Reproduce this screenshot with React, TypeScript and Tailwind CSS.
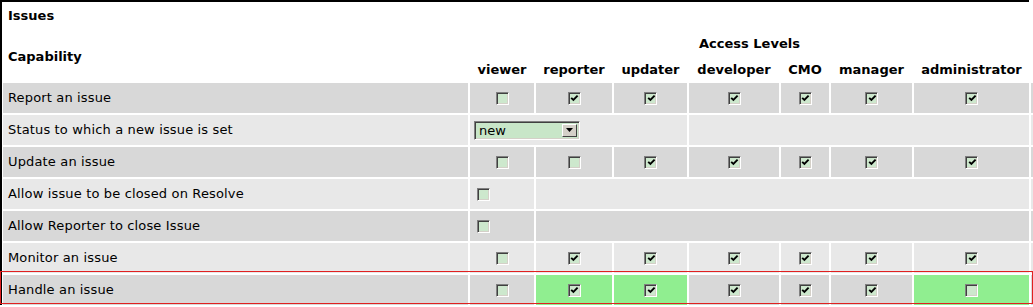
import React from 'react';

type Cell = boolean | null;

interface Row {
  label: string;
  tone: 'dark' | 'light';
  kind: 'grid' | 'select' | 'single';
  values?: Cell[];
  green?: boolean[];
}

const roles = ['viewer', 'reporter', 'updater', 'developer', 'CMO', 'manager', 'administrator'];

const rows: Row[] = [
  { label: 'Report an issue', tone: 'dark', kind: 'grid', values: [false, true, true, true, true, true, true] },
  { label: 'Status to which a new issue is set', tone: 'light', kind: 'select' },
  { label: 'Update an issue', tone: 'dark', kind: 'grid', values: [false, false, true, true, true, true, true] },
  { label: 'Allow issue to be closed on Resolve', tone: 'light', kind: 'single' },
  { label: 'Allow Reporter to close Issue', tone: 'dark', kind: 'single' },
  { label: 'Monitor an issue', tone: 'light', kind: 'grid', values: [false, true, true, true, true, true, true] },
  {
    label: 'Handle an issue',
    tone: 'dark',
    kind: 'grid',
    values: [false, true, true, true, true, true, false],
    green: [false, true, true, false, false, false, true],
  },
];

// old-style sunken checkbox with the pale green fill
function Checkbox({ checked }: { checked: boolean }) {
  return (
    <span className="inline-flex h-[13px] w-[13px] items-center justify-center border border-t-[#808080] border-l-[#808080] border-r-white border-b-white bg-[#cde8cd] shadow-[inset_1px_1px_0_#404040,inset_-1px_-1px_0_#d4d0c8]">
      {checked && (
        <svg width="9" height="9" viewBox="0 0 9 9" className="ml-[1px] mt-[1px]">
          <path d="M1.2 3.8 L3.4 6 L7.6 1.6" fill="none" stroke="#000" strokeWidth="1.9" />
        </svg>
      )}
    </span>
  );
}

function StatusSelect() {
  return (
    <div className="flex h-[19px] w-[106px] items-stretch border border-t-[#808080] border-l-[#808080] border-r-white border-b-white bg-[#c8e6c8] shadow-[inset_1px_1px_0_#404040,inset_-1px_-1px_0_#d4d0c8]">
      <span className="flex flex-1 items-center pl-[4px] text-[13px] leading-none">new</span>
      <span className="my-[2px] mr-[2px] flex w-[15px] items-center justify-center border border-t-white border-l-white border-r-[#404040] border-b-[#404040] bg-[#d4d0c8]">
        <svg width="7" height="4" viewBox="0 0 7 4">
          <path d="M0 0 H7 L3.5 4 Z" fill="#000" />
        </svg>
      </span>
    </div>
  );
}

export default function App() {
  return (
    <div className="relative h-[307px] w-[1033px] overflow-hidden bg-white font-['DejaVu_Sans',Verdana,sans-serif] text-[13px] text-black">
      <div className="w-[1029px] border-l-2 border-t-2 border-black pl-[1px]">
        <div className="grid grid-cols-[465px_64px_76px_73px_90px_48px_81px_115px_80px] grid-rows-[28px_23px_24px_repeat(7,30px)] gap-[2px]">
          {/* header */}
          <div className="col-span-9 flex items-center pl-[5px] font-bold">Issues</div>
          <div className="row-span-2 flex items-center pl-[5px] font-bold">Capability</div>
          <div className="col-span-7 flex items-center justify-center font-bold">Access Levels</div>
          <div />
          {roles.map((r) => (
            <div key={r} className="flex items-center justify-center pt-[2px] font-bold">
              {r}
            </div>
          ))}
          <div />

          {rows.map((row) => {
            const bg = row.tone === 'dark' ? 'bg-[#d8d8d8]' : 'bg-[#e8e8e8]';
            return (
              <React.Fragment key={row.label}>
                <div className={`${bg} flex items-center pl-[5px] tracking-[0.15px]`}>{row.label}</div>
                {row.kind === 'grid' &&
                  row.values!.map((v, i) => (
                    <div
                      key={i}
                      className={`${row.green && row.green[i] ? 'bg-[#90ee90]' : bg} flex items-center justify-center`}
                    >
                      <Checkbox checked={!!v} />
                    </div>
                  ))}
                {row.kind === 'select' && (
                  <>
                    <div className={`${bg} col-span-3 flex items-center pl-[4px]`}>
                      <StatusSelect />
                    </div>
                    <div className={`${bg} col-span-4`} />
                  </>
                )}
                {row.kind === 'single' && (
                  <>
                    <div className={`${bg} flex items-center pl-[7px]`}>
                      <Checkbox checked={false} />
                    </div>
                    <div className={`${bg} col-span-6`} />
                  </>
                )}
                <div className={bg} />
              </React.Fragment>
            );
          })}
        </div>
      </div>

      {/* changed-row highlight */}
      <div className="pointer-events-none absolute left-0 top-[271px] h-[33px] w-[1033px] border border-[#e02020]" />
    </div>
  );
}
